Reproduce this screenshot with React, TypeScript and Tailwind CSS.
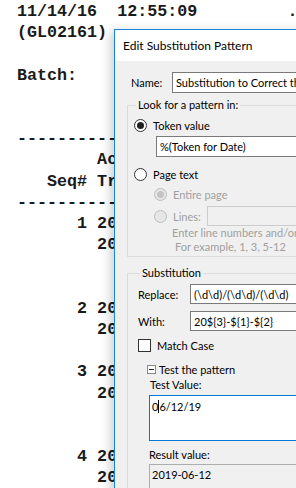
import React from 'react'

const reportLines = [
  '11/14/16  12:55:09         .',
  '(GL02161)',
  '',
  'Batch:',
  '',
  '',
  '-----------',
  '        Ac',
  '   Seq# Tr',
  '-----------',
  '      1 20',
  '        20',
  '',
  '',
  '      2 20',
  '        20',
  '',
  '      3 20',
  '        20',
  '',
  '',
  '      4 20',
  '        20',
]

function Radio({ checked, disabled }: { checked?: boolean; disabled?: boolean }) {
  return (
    <span
      className={`flex size-[13px] shrink-0 items-center justify-center rounded-full border ${
        disabled ? 'border-[#bcbcbc] bg-[#e6e6e6]' : 'border-[#333] bg-white'
      }`}
    >
      {checked && <span className={`size-[7px] rounded-full ${disabled ? 'bg-[#c4c4c4]' : 'bg-[#222]'}`} />}
    </span>
  )
}

export default function App() {
  return (
    <div className="relative h-[488px] w-[296px] overflow-hidden bg-white">
      {/* report printout behind the dialog */}
      <pre className="pl-[17px] pt-[1px] font-['Liberation_Mono',monospace] text-[16.7px] font-bold leading-[21.2px] text-[#1a1a1a]">
        {reportLines.join('\n')}
      </pre>

      {/* dialog */}
      <div className="absolute left-[114px] top-[29px] w-[320px] border-l border-t border-[#1883d7] font-['Lato',sans-serif] text-[11px] leading-[15px] text-black shadow-[-4px_2px_10px_rgba(0,0,0,0.18)]">
        <div className="flex h-[31px] items-center bg-white pl-[8px] text-[12px]">Edit Substitution Pattern</div>

        <div className="h-[440px] bg-[#f0f0f0] pl-[12px] pt-[11px]">
          <div className="flex items-center">
            <span className="w-[45px] pl-[4px]">Name:</span>
            <div className="flex h-[21px] flex-1 items-center border border-[#7a7a7a] bg-white pl-[3px]">
              Substitution to Correct the Date
            </div>
          </div>

          <fieldset className="mt-[4px] h-[160px] border border-[#dcdcdc] pl-[6px]">
            <legend className="ml-[2px] px-[2px] leading-[16px]">Look for a pattern in:</legend>
            <div className="mt-[5px] flex items-center gap-[6px]">
              <Radio checked />
              <span>Token value</span>
            </div>
            <div className="ml-[22px] mt-[3px] flex h-[21px] items-center border border-[#7a7a7a] bg-white pl-[3px]">
              %(Token for Date)
            </div>
            <div className="mt-[10px] flex items-center gap-[6px]">
              <Radio />
              <span>Page text</span>
            </div>
            <div className="ml-[20px] mt-[5px] flex items-center gap-[6px] text-[#a0a0a0]">
              <Radio checked disabled />
              <span>Entire page</span>
            </div>
            <div className="ml-[20px] mt-[4px] flex h-[20px] items-center gap-[6px] text-[#a0a0a0]">
              <Radio disabled />
              <span className="w-[28px]">Lines:</span>
              <div className="h-[20px] flex-1 border border-[#cccccc] bg-[#f0f0f0]" />
            </div>
            <div className="ml-[38px] leading-[14px] text-[#a0a0a0]">
              <div>Enter line numbers and/or</div>
              <div className="pl-[3px]">For example, 1, 3, 5-12</div>
            </div>
          </fieldset>

          <fieldset className="mt-[8px] h-[240px] border border-[#dcdcdc] pl-[10px]">
            <legend className="ml-[2px] px-[2px] leading-[16px]">Substitution</legend>
            <div className="mt-[3px] flex items-center">
              <span className="w-[52px]">Replace:</span>
              <div className="flex h-[20px] flex-1 items-center border border-[#7a7a7a] bg-white pl-[3px]">
                (\d\d)/(\d\d)/(\d\d)
              </div>
            </div>
            <div className="mt-[7px] flex items-center">
              <span className="w-[52px]">With:</span>
              <div className="flex h-[20px] flex-1 items-center border border-[#7a7a7a] bg-white pl-[3px]">
                20${'{3}'}-${'{1}'}-${'{2}'}
              </div>
            </div>
            <div className="mt-[8px] flex h-[13px] items-center gap-[6px]">
              <span className="size-[13px] border border-[#333] bg-white" />
              <span>Match Case</span>
            </div>
            <div className="ml-[9px] mt-[10px] flex items-center gap-[3px]">
              <span className="flex size-[9px] items-center justify-center border border-[#888] bg-white">
                <span className="h-px w-[5px] bg-[#222]" />
              </span>
              <span>Test the pattern</span>
            </div>
            <div className="ml-[11px]">
              <div className="pl-[1px]">Test Value:</div>
              <div className="mt-[3px] h-[46px] border border-[#0078d7] bg-white pl-[2px] pt-[2px]">
                <span>0</span>
                <span className="inline-block h-[13px] w-px translate-y-[2px] bg-black" />
                <span>6/12/19</span>
              </div>
              <div className="mt-[6px]">Result value:</div>
              <div className="mt-[2px] h-[30px] border border-[#adadad] bg-[#f0f0f0] pl-[2px] pt-[2px]">
                2019-06-12
              </div>
            </div>
          </fieldset>
        </div>
      </div>
    </div>
  )
}
